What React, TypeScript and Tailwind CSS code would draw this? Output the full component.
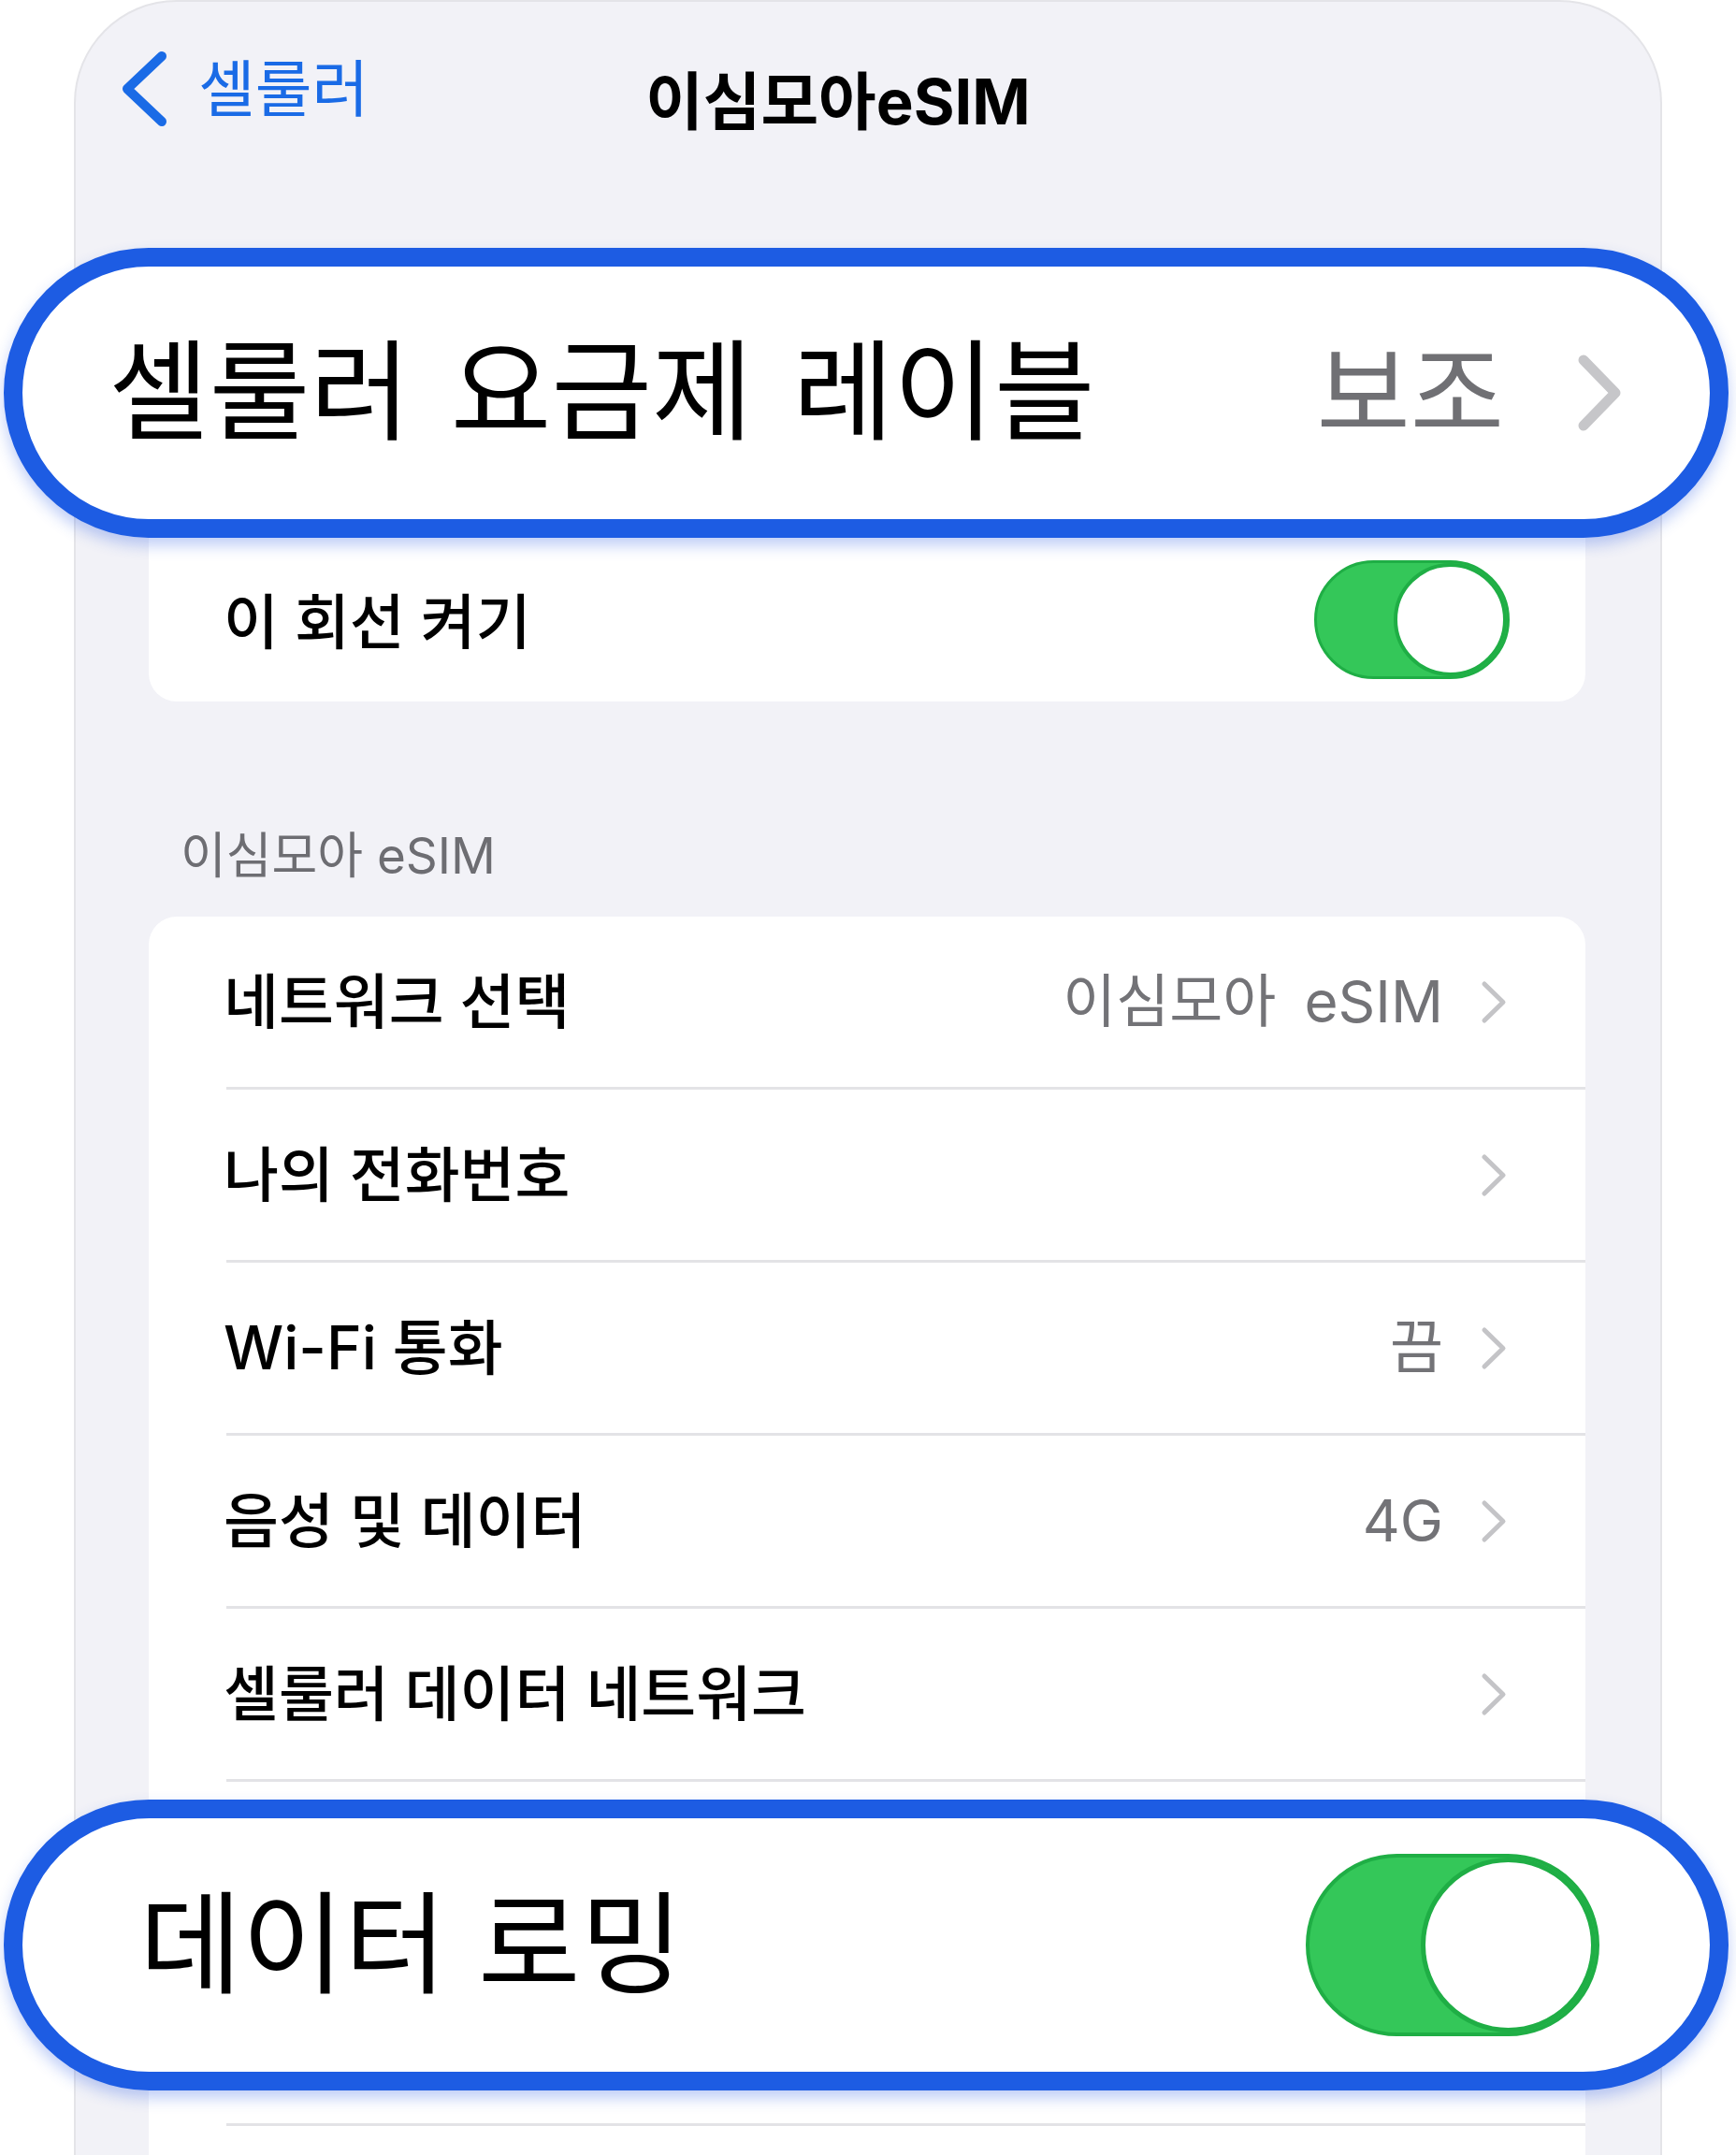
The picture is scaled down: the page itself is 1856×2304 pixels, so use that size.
import React from 'react';

const FONT = "font-[family-name:Inter,'Noto_Sans_CJK_KR',sans-serif]";

interface Row {
    label: string;
    value?: React.ReactNode;
}

const rows: Row[] = [
    {
        label: '네트워크 선택',
        value: (
            <>
                이심모아<span className="ml-[30px]">eSIM</span>
            </>
        ),
    },
    { label: '나의 전화번호' },
    { label: 'Wi-Fi 통화', value: '끔' },
    { label: '음성 및 데이터', value: '4G' },
    { label: '셀룰러 데이터 네트워크' },
];

// iOS style switch, always on in this screen
const Toggle: React.FC<{ big?: boolean }> = ({ big }) => (
    <div
        className={
            big
                ? 'flex h-[195px] w-[314px] justify-end rounded-full border-[4px] border-[#1fae45] bg-[#34c759]'
                : 'flex h-[127px] w-[209px] justify-end rounded-full border-[3px] border-[#1fae45] bg-[#34c759]'
        }
    >
        <div
            className={
                big
                    ? 'h-full aspect-square rounded-full border-[5px] border-[#1fae45] bg-white'
                    : 'h-full aspect-square rounded-full border-[4px] border-[#1fae45] bg-white'
            }
        />
    </div>
);

const SmallChevron = () => (
    <svg width="28" height="47" viewBox="0 0 28 47" fill="none">
        <polyline
            points="4,4 24,23.5 4,43"
            stroke="#c4c4c7"
            strokeWidth="5"
            strokeLinecap="round"
            strokeLinejoin="round"
        />
    </svg>
);

export default function App() {
    return (
        <div className={`h-[2304px] w-[1856px] overflow-hidden bg-white ${FONT}`}>
            <div className="ml-[79px] h-[2304px] w-[1698px] rounded-t-[110px] border-x-2 border-t-2 border-[#e4e4e8] bg-[#f2f2f7] pt-[53px]">
                {/* nav bar */}
                <div className="flex h-[80px] items-center pl-[48px]">
                    <svg width="50" height="80" viewBox="0 0 50 80" fill="none">
                        <polyline
                            points="44,5 7,40 44,75"
                            stroke="#1a6be6"
                            strokeWidth="10"
                            strokeLinecap="round"
                            strokeLinejoin="round"
                        />
                    </svg>
                    <span className="ml-[33px] text-[66px] leading-none text-[#1a6be6]">셀룰러</span>
                    <span className="ml-[296px] mt-[26px] text-[67px] font-bold leading-none text-black">이심모아eSIM</span>
                </div>

                {/* highlighted: plan label */}
                <div className="relative z-10 mt-[130px] -ml-[77px] flex h-[310px] w-[1844px] items-center rounded-[160px] border-[20px] border-[#1d5ce3] bg-white pl-[92px] pr-[94px] shadow-[0_8px_16px_rgba(40,90,230,0.3)]">
                    <span className="mb-[4px] text-[117px] leading-none text-black [word-spacing:10px]">셀룰러 요금제 레이블</span>
                    <span className="ml-auto text-[109px] leading-none text-[#707074]">보조</span>
                    <svg className="ml-[78px]" width="48" height="84" viewBox="0 0 48 84" fill="none">
                        <polyline
                            points="7,7 41,42 7,77"
                            stroke="#c6c6c9"
                            strokeWidth="11"
                            strokeLinecap="round"
                            strokeLinejoin="round"
                        />
                    </svg>
                </div>

                {/* line on/off */}
                <div className="ml-[78px] flex h-[175px] w-[1536px] items-center rounded-b-[30px] bg-white pl-[80px] pr-[81px]">
                    <span className="mt-[4px] text-[64px] font-medium leading-none text-black">이 회선 켜기</span>
                    <div className="ml-auto">
                        <Toggle />
                    </div>
                </div>

                <div className="ml-[112px] mt-[135px] flex h-[60px] items-center text-[53px] leading-none text-[#6d6d72]">
                    이심모아 eSIM
                </div>

                <div className="ml-[78px] mt-[35px] h-[1400px] w-[1536px] rounded-t-[30px] bg-white">
                    {rows.map((row) => (
                        <div key={row.label}>
                            <div className="flex h-[182px] items-center pl-[80px] pr-[84px]">
                                <span className="text-[64px] font-medium leading-none text-black">{row.label}</span>
                                {row.value && (
                                    <span className="ml-auto text-[62px] leading-none text-[#737377]">{row.value}</span>
                                )}
                                <span className={row.value ? 'ml-[40px]' : 'ml-auto'}>
                                    <SmallChevron />
                                </span>
                            </div>
                            <div className="ml-[83px] h-[3px] bg-[#e3e3e6]" />
                        </div>
                    ))}

                    {/* highlighted: data roaming */}
                    <div className="relative z-10 mt-[19px] -ml-[155px] flex h-[311px] w-[1844px] items-center rounded-[160px] border-[20px] border-[#1d5ce3] bg-white pl-[125px] pr-[118px] shadow-[0_8px_16px_rgba(40,90,230,0.3)]">
                        <span className="text-[119px] leading-none text-black">데이터 로밍</span>
                        <div className="ml-auto">
                            <Toggle big />
                        </div>
                    </div>
                    <div className="ml-[83px] mt-[35px] h-[3px] bg-[#e3e3e6]" />
                </div>
            </div>
        </div>
    );
}
